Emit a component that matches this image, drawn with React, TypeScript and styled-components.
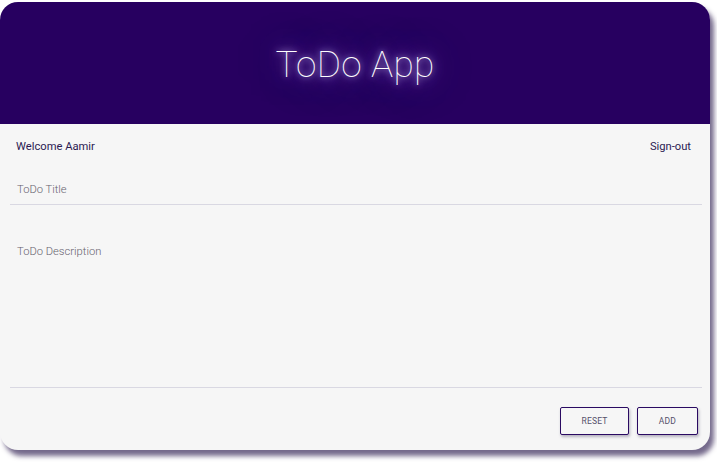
import React from "react";
import styled, { createGlobalStyle } from "styled-components";

const Global = createGlobalStyle`
  html, body { margin: 0; padding: 0; background: #ffffff; }
  body { font-family: Roboto, "Liberation Sans", sans-serif; }
  * { box-sizing: border-box; }
`;

const Page = styled.div`
  width: 717px;
  height: 462px;
  padding: 2px 0 0 0;
`;

const Card = styled.div`
  width: 710px;
  height: 448px;
  border-radius: 18px;
  overflow: hidden;
  background: #f6f6f6;
  box-shadow: 4px 6px 5px rgba(70, 55, 100, 0.75);
  display: flex;
  flex-direction: column;
`;

const Header = styled.header`
  height: 122px;
  background: #270060;
  display: flex;
  align-items: center;
  justify-content: center;
`;

const Title = styled.h1`
  margin: 0;
  font-family: Roboto, "Liberation Sans", sans-serif;
  font-weight: 100;
  font-size: 37px;
  color: #ffffff;
  text-shadow: 0 0 6px rgba(220, 205, 255, 0.95), 0 0 16px rgba(180, 155, 245, 0.85),
    0 0 30px rgba(160, 130, 230, 0.7), 0 0 48px rgba(140, 110, 210, 0.5);
  letter-spacing: 0.3px;
  padding-top: 2px;
`;

const Body = styled.div`
  flex: 1;
  display: flex;
  flex-direction: column;
  padding: 0 8px 0 10px;
`;

const TopRow = styled.div`
  display: flex;
  justify-content: space-between;
  align-items: center;
  height: 44px;
  padding: 0 11px 0 6px;
  font-size: 11.2px;
  color: #2b1a52;
`;

const Link = styled.span`
  cursor: pointer;
`;

const Field = styled.div<{ $h: number }>`
  height: ${(p) => p.$h}px;
  border-bottom: 1px solid #d9d8e2;
  padding: 0 7px;
  display: flex;
  align-items: flex-start;
`;

const Placeholder = styled.span<{ $top: number }>`
  margin-top: ${(p) => p.$top}px;
  font-size: 11.2px;
  font-weight: 300;
  color: #66626e;
`;

const Actions = styled.div`
  display: flex;
  justify-content: flex-end;
  gap: 8px;
  padding: 19px 4px 0 0;
`;

const Button = styled.button<{ $w: number }>`
  width: ${(p) => p.$w}px;
  height: 28px;
  background: #f6f6f6;
  border: 1.5px solid #2a0a62;
  border-radius: 2px;
  box-shadow: 1px 2px 3px rgba(60, 50, 90, 0.35);
  font-family: Roboto, "Liberation Sans", sans-serif;
  font-size: 8.5px;
  color: #55506a;
  letter-spacing: 0.2px;
  cursor: pointer;
`;

export default function App() {
  return (
    <>
      <Global />
      <Page>
        <Card>
          <Header>
            <Title>ToDo App</Title>
          </Header>
          <Body>
            <TopRow>
              <span>Welcome Aamir</span>
              <Link>Sign-out</Link>
            </TopRow>
            <Field $h={37}>
              <Placeholder $top={15}>ToDo Title</Placeholder>
            </Field>
            <Field $h={183}>
              <Placeholder $top={40}>ToDo Description</Placeholder>
            </Field>
            <Actions>
              <Button $w={69}>RESET</Button>
              <Button $w={61}>ADD</Button>
            </Actions>
          </Body>
        </Card>
      </Page>
    </>
  );
}
